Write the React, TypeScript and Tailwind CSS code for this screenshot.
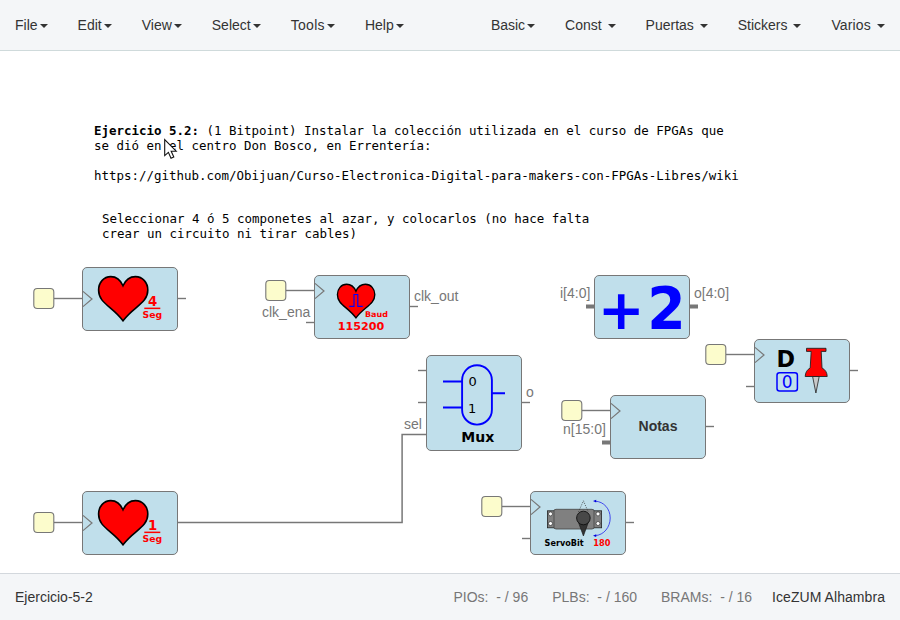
import type { ReactNode } from 'react';

const leftMenu = ['File', 'Edit', 'View', 'Select', 'Tools', 'Help'];
const rightMenu = ['Basic', 'Const ', 'Puertas ', 'Stickers ', 'Varios '];

const tracking: Record<string, string> = {
  Tools: 'tracking-[0.3px]',
  'Varios ': 'tracking-[0.15px]',
};

function MenuItem({ label }: { label: string }) {
  return (
    <li className={`flex items-center px-[15px] whitespace-pre ${tracking[label] ?? ''}`}>
      {label}
      <span className="ml-[2px] mt-px h-0 w-0 border-x-4 border-t-4 border-x-transparent border-t-[#333333]" />
    </li>
  );
}

function Block({ place, size = 'h-[64px]', children }: { place: string; size?: string; children: ReactNode }) {
  return (
    <div className={`absolute w-[96px] rounded-[5px] border border-[#777777] bg-[#c0dfeb] ${size} ${place}`}>{children}</div>
  );
}

function Art({ clock, height = 62, children }: { clock?: number; height?: number; children?: ReactNode }) {
  return (
    <svg width="94" height={height} viewBox={`1 1 94 ${height}`} className="block overflow-visible">
      {clock !== undefined && (
        <path d={`M1 ${clock - 7.6} L10 ${clock} L1 ${clock + 7.6}`} fill="none" stroke="#777" strokeWidth="1.2" />
      )}
      {children}
    </svg>
  );
}

const sans = '"DejaVu Sans", sans-serif';

function Heart({ transform, strokeWidth = 1.6 }: { transform?: string; strokeWidth?: number }) {
  return (
    <path
      transform={transform}
      d="M41 18.8 C38.5 13 34 9.6 28.8 9.6 C21.5 9.6 16.6 15.8 16.6 23 C16.6 36.4 30 39 41 53.8 C52 39 65.8 36.4 65.8 23 C65.8 15.8 60.8 9.6 53.4 9.6 C48 9.6 43.5 13 41 18.8Z"
      fill="#ff0000"
      stroke="#000"
      strokeWidth={strokeWidth}
    />
  );
}

function HeartSeconds({ value }: { value: string }) {
  return (
    <Art clock={32}>
      <Heart />
      <g fill="#ff0000" fontFamily={sans} fontWeight="bold">
        <text x="70.7" y="39" fontSize="13.3" textAnchor="middle">{value}</text>
        <rect x="62.3" y="40.6" width="16" height="1.5" />
        <text x="60.5" y="50.7" fontSize="9" textLength="19.6" lengthAdjust="spacingAndGlyphs">Seg</text>
      </g>
    </Art>
  );
}

const clocks = [
  [33, 298],
  [265, 290],
  [705, 354],
  [561, 410],
  [481, 506],
  [33, 522],
];

const stubs = [
  [178, 298], [306, 322], [410, 306], [746, 386], [850, 370], [418, 370],
  [418, 402], [522, 402], [706, 426], [522, 538], [626, 522],
];

const buses = [[586, 306], [690, 306], [602, 442]];

const ports: [string, number, number][] = [
  ['clk_ena', 262, 317],
  ['clk_out', 414, 301],
  ['i[4:0]', 560, 298],
  ['o[4:0]', 694, 298],
  ['sel', 404, 429],
  ['o', 526, 397],
  ['n[15:0]', 563, 434],
];

function Wiring() {
  return (
    <svg width="900" height="522" viewBox="0 51 900 522" className="block">
      <g stroke="#777" strokeWidth="1.4" fill="none">
        {clocks.map(([x, y]) => (
          <path key={`${x}-${y}`} d={`M${x + 21} ${y + 0.5} H${x + 49}`} />
        ))}
        {stubs.map(([x, y]) => (
          <path key={`${x}-${y}`} d={`M${x} ${y + 0.5} h8`} />
        ))}
        <path d="M178 522.4 H402.1 V434.4 H426" strokeWidth="1.5" />
      </g>
      {buses.map(([x, y]) => (
        <rect key={`${x}-${y}`} x={x} y={y - 1.5} width="8" height="4" fill="#777" />
      ))}
      {clocks.map(([x, y]) => (
        <rect key={`${x}-${y}`} x={x + 0.8} y={y - 9.5} width="20" height="20" rx="3.5" fill="#fcfccc" stroke="#777" strokeWidth="1.1" />
      ))}
      <g fill="#777" fontFamily='"Liberation Sans", Arial, sans-serif' fontSize="14">
        {ports.map(([label, x, y]) => (
          <text key={label} x={x} y={y}>{label}</text>
        ))}
      </g>
    </svg>
  );
}

export default function App() {
  return (
    <div className="flex h-[620px] w-[900px] flex-col overflow-hidden bg-white font-['Liberation_Sans',Arial,sans-serif] text-[14px] leading-5 text-[#333333]">
      <nav className="flex h-[51px] shrink-0 items-center justify-between border-b border-[#cfdadb] bg-[#f4f6f8]">
        <ul className="flex">
          {leftMenu.map((label) => <MenuItem key={label} label={label} />)}
        </ul>
        <ul className="flex">
          {rightMenu.map((label) => <MenuItem key={label} label={label} />)}
        </ul>
      </nav>

      <main className="relative h-[522px] shrink-0">
        <Wiring />

        <div className="absolute left-[94px] top-[72px] whitespace-pre font-['DejaVu_Sans_Mono',monospace] text-[12.46px] leading-[15px] text-black">
          <p><b>Ejercicio 5.2:</b> (1 Bitpoint) Instalar la colección utilizada en el curso de FPGAs que</p>
          <p>se dió en el centro Don Bosco, en Errentería:</p>
          <p className="mt-[15px]">https://github.com/Obijuan/Curso-Electronica-Digital-para-makers-con-FPGAs-Libres/wiki</p>
        </div>
        <div className="absolute left-[102px] top-[160px] whitespace-pre font-['DejaVu_Sans_Mono',monospace] text-[12.46px] leading-[15px] text-black">
          <p>Seleccionar 4 ó 5 componetes al azar, y colocarlos (no hace falta</p>
          <p>crear un circuito ni tirar cables)</p>
        </div>

        <Block place="left-[82px] top-[216px]"><HeartSeconds value="4" /></Block>
        <Block place="left-[82px] top-[440px]"><HeartSeconds value="1" /></Block>

        <Block place="left-[314px] top-[224px]">
          <Art clock={16}>
            <Heart transform="translate(10.8 2) scale(.76)" strokeWidth={1.8} />
            <path d="M35.3 31.4 H40 V19.5 H43.8 V31.4 H48.7" fill="none" stroke="#0000ff" strokeWidth="1.1" />
            <g fill="#ff0000" fontFamily={sans} fontWeight="bold">
              <text x="51" y="41.7" fontSize="7.8" textLength="23" lengthAdjust="spacingAndGlyphs">Baud</text>
              <text x="23.8" y="55" fontSize="11" textLength="46.5" lengthAdjust="spacingAndGlyphs">115200</text>
            </g>
          </Art>
        </Block>

        <Block place="left-[594px] top-[224px]">
          <Art>
            <g fontWeight="bold" fontFamily={sans} fill="#0000ff">
              <text x="3.8" y="54" fontSize="56">+</text>
              <text x="53.2" y="53.9" fontSize="59" textLength="38.4" lengthAdjust="spacingAndGlyphs">2</text>
            </g>
          </Art>
        </Block>

        <Block place="left-[754px] top-[288px]">
          <Art clock={16}>
            <text x="22.5" y="27.6" fontSize="22.3" fontWeight="bold" fontFamily={sans}>D</text>
            <rect x="23" y="33.8" width="20.4" height="18.2" rx="2.5" fill="none" stroke="#0000ff" strokeWidth="1.5" />
            <text x="33.2" y="49" fontSize="17" textAnchor="middle" fontFamily={sans} fill="#0000ff">0</text>
            <path d="M58.6 37.5 H65.2 L61.9 54 Z" fill="#c8c8c8" stroke="#222" strokeWidth=".8" />
            <path d="M52.5 9.3 H72 V12.4 H67.2 L68 29 Q73 31.5 73.2 37.5 H51.2 Q51.4 31.5 56.2 29 L57.2 12.4 H52.5 Z" fill="#ff0000" stroke="#222" strokeWidth=".9" />
          </Art>
        </Block>

        <Block place="left-[426px] top-[304px]" size="h-[96px]">
          <Art height={94}>
            <g fill="none" stroke="#0000ff" strokeWidth="1.9">
              <rect x="36.1" y="10.2" width="29.8" height="59.4" rx="14.9" />
              <path d="M17 26.5 H36 M17 52.5 H36 M66 38.3 H79" />
            </g>
            <g fontFamily={sans}>
              <text x="46.6" y="31" fontSize="13" textAnchor="middle">0</text>
              <text x="46.2" y="58" fontSize="13" textAnchor="middle">1</text>
              <text x="35.2" y="87" fontSize="13.3" fontWeight="bold" textLength="33" lengthAdjust="spacingAndGlyphs">Mux</text>
            </g>
          </Art>
        </Block>

        <Block place="left-[610px] top-[344px]">
          <div className="relative h-full">
            <div className="absolute inset-0 flex items-center justify-center pb-[3px] font-bold">Notas</div>
            <Art clock={16} />
          </div>
        </Block>

        <Block place="left-[530px] top-[440px]">
          <Art clock={16}>
            <g fill="#808080" stroke="#222" strokeWidth=".8">
              <rect x="17.4" y="19.8" width="54.2" height="17" />
              <path d="M24 19 L26 18.3 H62 L64 19 V37.2 L62 38 H26 L24 37.2 Z" stroke="#444" />
            </g>
            <g fill="#fff" stroke="#222" strokeWidth=".6">
              <circle cx="20.5" cy="22.9" r="2" />
              <circle cx="20.5" cy="32.5" r="2" />
              <circle cx="68" cy="22.9" r="2" />
              <circle cx="68" cy="32.5" r="2" />
            </g>
            <path d="M48.5 21 L53.4 9.8 L58.3 21" fill="none" stroke="#333" strokeWidth=".7" strokeDasharray="1.2 1.2" />
            <path d="M47.6 29 L53.4 45 L59.2 29 Z" fill="#333" stroke="#111" strokeWidth=".6" />
            <circle cx="53.4" cy="27" r="6.8" fill="#484848" stroke="#111" strokeWidth=".9" />
            <path d="M65 10.2 C74 10.5 80.2 18 80.2 27 C80.2 36 74 44.2 65 44.6" fill="none" stroke="#2222ee" strokeWidth=".8" />
            <path d="M63 10 L66.2 8.7 V11.5 Z M63 44.7 L66.2 43.3 V46.1 Z" fill="#0000dd" />
            <g fontFamily={sans} fontWeight="bold" fontSize="8.8">
              <text x="14.6" y="54.7" textLength="39" lengthAdjust="spacingAndGlyphs">ServoBit</text>
              <text x="63.2" y="54.7" fill="#ff0000" textLength="17.2" lengthAdjust="spacingAndGlyphs">180</text>
            </g>
          </Art>
        </Block>

        <svg className="absolute left-[163px] top-[87px]" width="15" height="22" viewBox="0 0 15 22">
          <path d="M1.7 1.6 V17.6 L5.4 14.3 L8 20.2 L10.8 18.9 L8.2 13.2 H13.2 Z" fill="#fff" stroke="#111" strokeWidth="1.1" />
        </svg>
      </main>

      <footer className="flex h-[47px] shrink-0 items-center justify-between border-t border-[#d3d8dd] bg-[#f4f6f8] px-[15px]">
        <span>Ejercicio-5-2</span>
        <div className="flex whitespace-pre text-[#777777]">
          <span>PIOs:  - / 96</span>
          <span className="ml-6">PLBs:  - / 160</span>
          <span className="ml-6">BRAMs:  - / 16</span>
          <span className="ml-5 tracking-[0.06px] text-[#333333]">IceZUM Alhambra</span>
        </div>
      </footer>
    </div>
  );
}
